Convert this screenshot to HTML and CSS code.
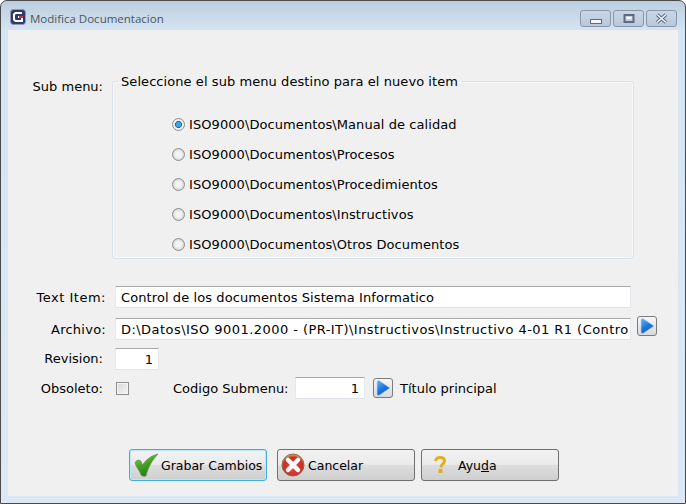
FILE: index.html
```html
<!DOCTYPE html>
<html lang="es">
<head>
<meta charset="utf-8">
<title>Modifica Documentacion</title>
<link rel="stylesheet" href="styles.css">
</head>
<body>
<svg class="defs" width="0" height="0">
  <defs>
    <linearGradient id="arrowFill" x1="0" y1="0" x2="0.600" y2="1"><stop offset="0" stop-color="#6cb6f5"/><stop offset="0.550" stop-color="#1f78dc"/><stop offset="1" stop-color="#0f5cc0"/></linearGradient>
    <linearGradient id="checkFill" x1="0" y1="0" x2="0.500" y2="1"><stop offset="0" stop-color="#8fd04f"/><stop offset="0.500" stop-color="#45a526"/><stop offset="1" stop-color="#1f7a12"/></linearGradient>
    <radialGradient id="cancelFill" cx="0.500" cy="0.600" r="0.600"><stop offset="0" stop-color="#e8483a"/><stop offset="0.750" stop-color="#c72f26"/><stop offset="1" stop-color="#e4b95c"/></radialGradient>
  </defs>
</svg>
<div class="window">
  <header class="titlebar">
    <svg class="app-icon" width="16" height="16" viewBox="0 0 16 16"><rect x="0.5" y="0.5" width="15" height="15" rx="3" fill="#2f3a66" stroke="#8f97b5"/><path d="M12 4H5.500L4 5.500v5L5.500 12H12V8H8" fill="none" stroke="#fff" stroke-width="2"/><path d="M9 7h4v2H9z" fill="#d8343c"/></svg>
    <span class="title">Modifica Documentacion</span>
    <div class="controls">
      <div class="ctl"><svg class="ctl-min" width="12" height="5" viewBox="0 0 12 5"><rect x="0.500" y="0.500" width="11" height="4" fill="#f4f6fa" stroke="#5d6a85"/></svg></div>
      <div class="ctl"><svg width="12" height="9" viewBox="0 0 12 9"><rect x="1.500" y="1" width="9" height="7" fill="none" stroke="#5d6a85" stroke-width="2"/><rect x="3.500" y="3" width="5" height="2" fill="#fff"/></svg></div>
      <div class="ctl"><svg width="13" height="11" viewBox="0 0 13 11"><path d="M2 1.500l9 8M11 1.500l-9 8" stroke="#5d6a85" stroke-width="3.600"/><path d="M2 1.500l9 8M11 1.500l-9 8" stroke="#f0f2f6" stroke-width="1.600"/></svg></div>
    </div>
  </header>
  <main class="panel">
    <section class="submenu-row">
      <div class="label label-sub">Sub menu:</div>
      <fieldset class="group">
        <legend>Seleccione el sub menu destino para el nuevo item</legend>
        <div class="radio-list">
          <div class="radio-item"><span class="radio on"></span>ISO9000\Documentos\Manual de calidad</div>
          <div class="radio-item"><span class="radio"></span>ISO9000\Documentos\Procesos</div>
          <div class="radio-item"><span class="radio"></span>ISO9000\Documentos\Procedimientos</div>
          <div class="radio-item"><span class="radio"></span>ISO9000\Documentos\Instructivos</div>
          <div class="radio-item"><span class="radio"></span>ISO9000\Documentos\Otros Documentos</div>
        </div>
      </fieldset>
    </section>
    <section class="fields">
      <div class="row row-text">
        <div class="label label-wide label-item">Text Item:</div>
        <div class="input input-long">Control de los documentos Sistema Informatico</div>
      </div>
      <div class="row row-file">
        <div class="label label-wide">Archivo:</div>
        <div class="input input-long input-path">D:\Datos\ISO 9001.2000 - (PR-IT)\Instructivos\Instructivo 4-01 R1 (Contro</div>
        <div class="arrow arrow-file"><svg width="16" height="18" viewBox="0 0 16 18"><path d="M2 3Q2 1 4 1.500L15 9L4 16.500Q2 17 2 15Z" fill="url(#arrowFill)" stroke="#b7d6f2" stroke-width="0.600"/></svg></div>
      </div>
      <div class="row row-rev">
        <div class="label label-rev">Revision:</div>
        <div class="input input-num input-rev">1</div>
      </div>
      <div class="row row-obs">
        <div class="label">Obsoleto:</div>
        <span class="check"></span>
        <div class="code-label">Codigo Submenu:</div>
        <div class="input input-num input-code">1</div>
        <div class="arrow"><svg width="16" height="18" viewBox="0 0 16 18"><path d="M2 3Q2 1 4 1.500L15 9L4 16.500Q2 17 2 15Z" fill="url(#arrowFill)" stroke="#b7d6f2" stroke-width="0.600"/></svg></div>
        <div class="hint">Título principal</div>
      </div>
    </section>
    <footer class="buttons">
      <button class="btn btn-default"><svg class="btn-icon" width="26" height="26" viewBox="0 0 26 26"><path d="M2 11Q3 8 6 8Q8 8 9.500 13C12 9 17 4 25 2C20 7 15 15 13 24Q10 25 8 23C7 19 3 15 2 11Z" fill="url(#checkFill)" stroke="#6f8f62" stroke-width="0.800"/></svg><span>Grabar Cambios</span></button>
      <button class="btn btn-cancel"><svg class="btn-icon" width="24" height="24" viewBox="0 0 24 24"><circle cx="12" cy="12" r="11" fill="url(#cancelFill)" stroke="#8f6a4a"/><path d="M7 7l10 10M17 7L7 17" stroke="#fff" stroke-width="4.500" stroke-linecap="round"/></svg><span>Cancelar</span></button>
      <button class="btn btn-help"><svg class="btn-icon" width="14" height="18" viewBox="0 0 14 18"><path d="M2.500 5C3 2.500 5 1.500 7 1.500c3 0 4.500 1.500 4.500 3.500 0 3-3.500 3-3.500 6.500" fill="none" stroke="#e3ae1e" stroke-width="3"/><rect x="5.500" y="13" width="4" height="4" fill="#e3ae1e"/></svg><span>Ayu<u>d</u>a</span></button>
    </footer>
  </main>
</div>
</body>
</html>
```
FILE: styles.css
```css
* { box-sizing: border-box; }
html, body { margin: 0; height: 100%; }
body {
  font-family: "DejaVu Sans", sans-serif;
  font-size: 13px;
  color: #000;
  background: #fff;
}
.defs { display: block; height: 0; }
.window {
  width: 686px;
  height: 504px;
  display: flex;
  flex-direction: column;
  border: 1px solid #4a4a4a;
  border-radius: 7px 7px 0 0;
  background: linear-gradient(180deg, #bccddd 0, #d6e5f3 30px, #dce8f4 100%);
  overflow: hidden;
}
.titlebar {
  height: 29px;
  flex: none;
  display: flex;
  align-items: center;
  padding: 5px 1px 0 9px;
}
.app-icon { flex: none; margin-top: -2px; }
.title {
  margin-left: 4px;
  font-family: "Open Sans", sans-serif;
  font-size: 11.500px;
  color: #4b5560;
}
.controls {
  margin-left: auto;
  align-self: flex-start;
  margin-top: 4px;
  margin-right: 8px;
  display: flex;
  gap: 2px;
  transform: translateX(1px);
}
.ctl {
  width: 31px;
  height: 17px;
  display: flex;
  align-items: center;
  justify-content: center;
  border: 1px solid #8896ac;
  border-radius: 3px;
  background: linear-gradient(180deg, #c9d6e4, #b9c8da);
}
.ctl-min { margin-top: 6px; }
.panel {
  flex: 1;
  margin: 0 7px 7px;
  background: #f0f0f0;
  display: flex;
  flex-direction: column;
}
.label { width: 95px; text-align: right; flex: none; white-space: nowrap; }
.label-wide { width: 98px; letter-spacing: 0.25px; }
.label-item { letter-spacing: 0.5px; }
.label-rev { margin-top: -2px; }
.submenu-row {
  display: flex;
  margin-top: 44px;
}
.label-sub { margin-top: 5px; }
.group {
  margin: 0 0 0 9px;
  width: 522px;
  height: 185px;
  padding: 0;
  border: 1px solid #d9e3ee;
  border-radius: 3px;
  box-shadow: inset 0 0 0 1px #f8f8f8;
}
.group legend { padding: 0 3px; margin-left: 5px; line-height: 15px; letter-spacing: 0.07px; }
.radio-list { display: flex; flex-direction: column; gap: 14px; margin-top: 27px; padding-left: 59px; letter-spacing: 0.08px; }
.radio-item { display: flex; align-items: center; height: 16px; white-space: nowrap; }
.radio {
  width: 13px;
  height: 13px;
  flex: none;
  border-radius: 50%;
  margin-right: 4px;
  border: 1px solid #8e8f8f;
  background: radial-gradient(circle, #f4f4f4 0 35%, #cfcfcf 80%);
}
.radio.on { background: radial-gradient(circle, #3fa7df 0 28%, #1c5f8a 42%, #f1f1f1 48%); }
.fields { margin-top: 27px; display: flex; flex-direction: column; }
.row { display: flex; align-items: center; }
.row-file { margin-top: 10px; }
.row-rev { margin-top: 8px; }
.row-obs { margin-top: 7px; }
.input {
  height: 22px;
  background: #fff;
  border-top: 1px solid #a8a8a8;
  border-bottom: 1px solid #e0e3ea;
  border-left: 1px solid #e6e8ee;
  border-right: 1px solid #e6e8ee;
  padding: 0 5px;
  line-height: 21px;
  white-space: nowrap;
  overflow: hidden;
}
.input-long { width: 516px; margin-left: 9px; letter-spacing: 0.09px; }
.input-path { letter-spacing: 0.45px; }
.input-num { text-align: right; }
.input-rev { width: 44px; margin-left: 12px; }
.arrow {
  width: 20px;
  height: 20px;
  flex: none;
  display: flex;
  align-items: center;
  justify-content: center;
  border: 1px solid #7b7b7b;
  border-radius: 3px;
  background: linear-gradient(180deg, #f6f6f6, #d9d9d9);
}
.arrow-file { margin-left: 6px; margin-top: -6px; }
.check {
  width: 13px;
  height: 13px;
  flex: none;
  margin-left: 13px;
  border: 1px solid #8e8f8f;
  background: linear-gradient(135deg, #d8d8d8, #f6f6f6);
  box-shadow: inset 0 0 0 1px #f4f4f4;
}
.code-label { margin-left: 44px; width: 122px; white-space: nowrap; }
.input-code { width: 70px; }
.row-obs .arrow { margin-left: 8px; }
.hint { margin-left: 7px; white-space: nowrap; }
.buttons {
  display: flex;
  margin-top: 50px;
  margin-left: 121px;
  gap: 10px;
}
.btn {
  width: 138px;
  height: 32px;
  display: flex;
  align-items: center;
  padding: 0 0 0 3px;
  font: inherit;
  font-size: 12.500px;
  color: #000;
  border: 1px solid #707070;
  border-radius: 3px;
  background: linear-gradient(180deg, #f2f2f2 0, #ebebeb 48%, #dddddd 50%, #cfcfcf 100%);
}
.btn-default { border-color: #3cb0e4; box-shadow: inset 0 0 0 1px #bfe6f7; }
.btn-help { margin-left: -4px; padding-left: 11px; }
.btn-icon { flex: none; }
.btn-default span { margin-left: 2px; }
.btn-cancel span { margin-left: 3px; }
.btn-help span { margin-left: 11px; }
```
